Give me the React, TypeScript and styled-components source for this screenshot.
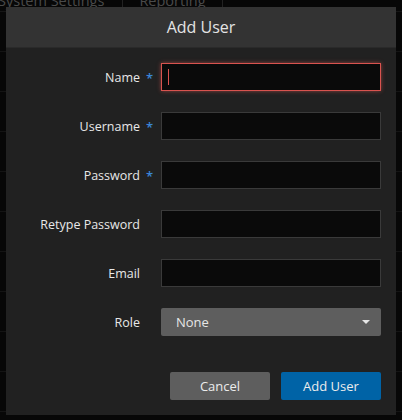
import styled, { createGlobalStyle } from 'styled-components';

const GlobalStyle = createGlobalStyle`
  html, body {
    margin: 0;
    padding: 0;
    background: #080808;
    font-family: 'Open Sans', 'Liberation Sans', sans-serif;
  }
`;

const Page = styled.div`
  position: relative;
  width: 402px;
  height: 420px;
  overflow: hidden;
  background: #070707;
`;

const TabBar = styled.div`
  display: flex;
  align-items: center;
  height: 20px;
  margin-top: -9px;
  border-bottom: 1px solid #161616;
`;

const Tab = styled.div`
  padding: 0 16px 0 0;
  margin-right: 16px;
  color: #4a4a4a;
  font-size: 14.5px;
  border-right: 1px solid #222;
  line-height: 20px;
  &:first-child {
    margin-left: -2px;
    padding-right: 18px;
  }
`;

const BackRows = styled.div`
  display: flex;
  flex-direction: column;
`;

const BackRow = styled.div`
  height: 39px;
  border-bottom: 1px solid #141414;
`;

const Modal = styled.div`
  position: absolute;
  left: 6px;
  top: 7px;
  width: 390px;
  height: 408px;
  background: #212121;
  display: flex;
  flex-direction: column;
`;

const Header = styled.div`
  height: 40px;
  background: #333333;
  border-bottom: 1px solid #2a2a2a;
  display: flex;
  align-items: center;
  justify-content: center;
  color: #e4e4e4;
  font-size: 16px;
`;

const Body = styled.div`
  display: flex;
  flex-direction: column;
  gap: 21px;
  padding: 15px 15px 0 0;
`;

const Row = styled.div`
  display: flex;
  align-items: center;
`;

const LabelCell = styled.div`
  width: 134px;
  flex-shrink: 0;
  text-align: right;
  position: relative;
  color: #e8e8e8;
  font-size: 12.5px;
  padding-right: 21px;
`;

const Required = styled.span`
  position: absolute;
  right: 8px;
  top: 0;
  color: #3a86d6;
  font-size: 13px;
  font-weight: 600;
`;

const Input = styled.div<{ $focused?: boolean }>`
  width: 220px;
  height: 28px;
  box-sizing: border-box;
  background: #0a0a0a;
  border: 1px solid ${(p) => (p.$focused ? '#d9534f' : '#3a3a3a')};
  box-shadow: ${(p) => (p.$focused ? '0 0 4px rgba(217,83,79,0.6)' : 'none')};
  display: flex;
  align-items: center;
  padding-left: 6px;
`;

const Caret = styled.div`
  width: 1px;
  height: 16px;
  background: #d9534f;
`;

const Select = styled.div`
  width: 220px;
  height: 28px;
  box-sizing: border-box;
  background: #5e5e5e;
  border-radius: 2px;
  display: flex;
  align-items: center;
  justify-content: space-between;
  padding: 0 11px 0 15px;
  color: #e6e6e6;
  font-size: 13px;
`;

const Arrow = styled.div`
  width: 0;
  height: 0;
  border-left: 4px solid transparent;
  border-right: 4px solid transparent;
  border-top: 4px solid #e6e6e6;
`;

const Footer = styled.div`
  display: flex;
  justify-content: flex-end;
  gap: 11px;
  padding: 36px 15px 0 0;
`;

const Button = styled.div<{ $primary?: boolean }>`
  width: 100px;
  height: 28px;
  border-radius: 2px;
  background: ${(p) => (p.$primary ? '#0063a6' : '#5e5e5e')};
  color: #ececec;
  font-size: 13px;
  display: flex;
  align-items: center;
  justify-content: center;
`;

const fields: { label: string; required?: boolean }[] = [
  { label: 'Name', required: true },
  { label: 'Username', required: true },
  { label: 'Password', required: true },
  { label: 'Retype Password' },
  { label: 'Email' },
];

export default function App() {
  return (
    <Page>
      <GlobalStyle />
      <TabBar>
        <Tab>System Settings</Tab>
        <Tab>Reporting</Tab>
      </TabBar>
      <BackRows>
        {Array.from({ length: 10 }).map((_, i) => (
          <BackRow key={i} />
        ))}
      </BackRows>
      <Modal>
        <Header>Add User</Header>
        <Body>
          {fields.map((f, i) => (
            <Row key={f.label}>
              <LabelCell>
                {f.label}
                {f.required && <Required>*</Required>}
              </LabelCell>
              <Input $focused={i === 0}>{i === 0 && <Caret />}</Input>
            </Row>
          ))}
          <Row>
            <LabelCell>Role</LabelCell>
            <Select>
              None
              <Arrow />
            </Select>
          </Row>
        </Body>
        <Footer>
          <Button>Cancel</Button>
          <Button $primary>Add User</Button>
        </Footer>
      </Modal>
    </Page>
  );
}
